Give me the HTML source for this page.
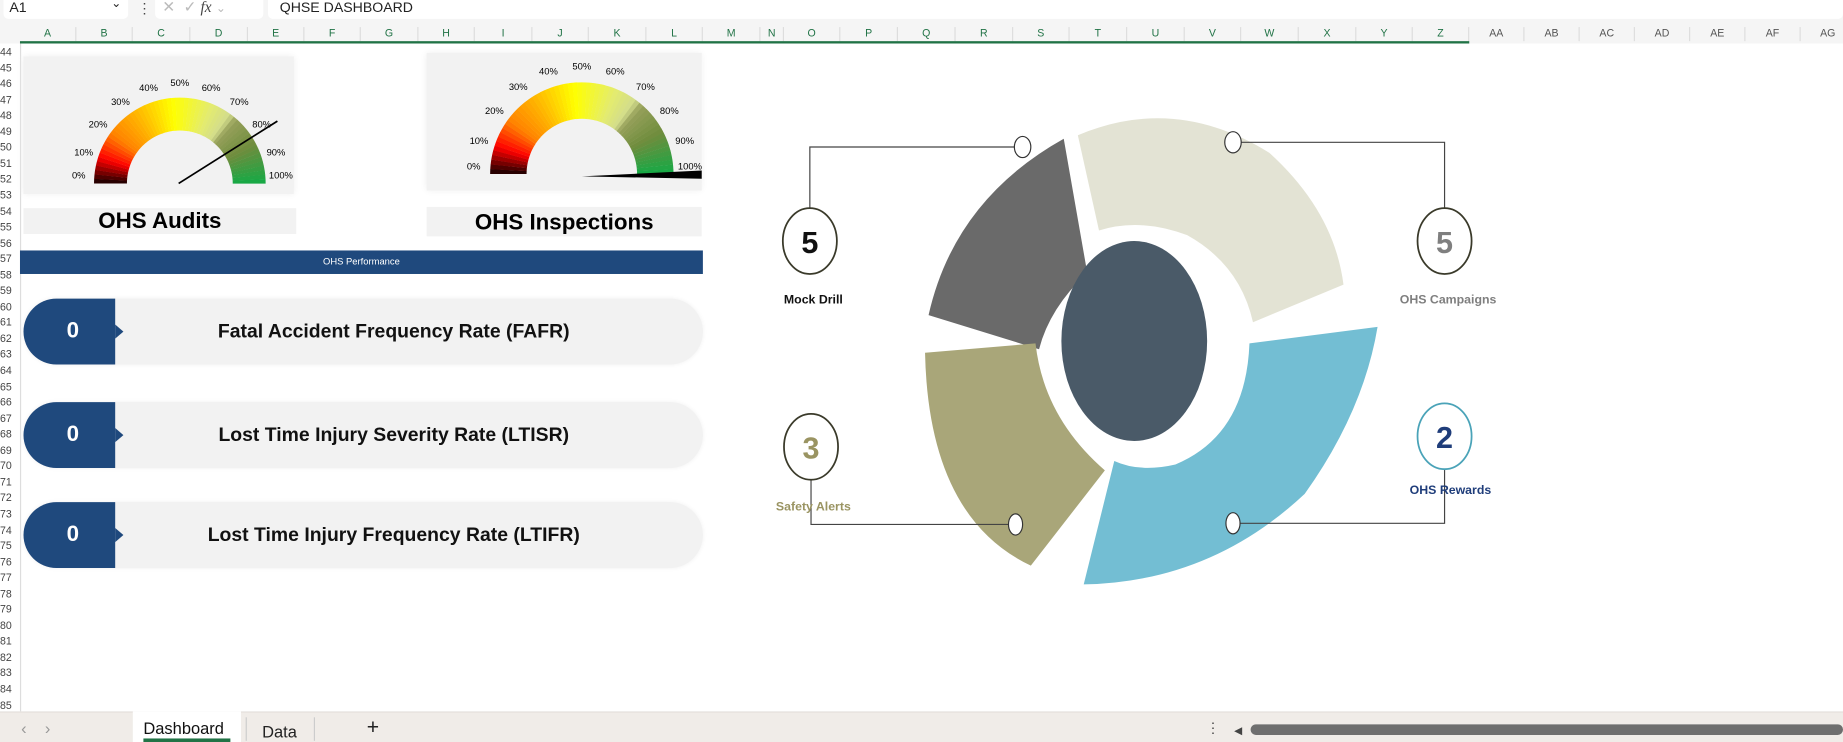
<!DOCTYPE html>
<html><head><meta charset="utf-8">
<style>
*{margin:0;padding:0;box-sizing:border-box}
html,body{width:1843px;height:742px;overflow:hidden;background:#fff}
#w{position:absolute;left:0;top:0;width:1568px;height:631px;transform:scale(1.1754,1.1759);transform-origin:0 0;font-family:"Liberation Sans",sans-serif}
.abs{position:absolute}
.nar{font-family:"Liberation Sans Narrow","Liberation Sans",sans-serif}
</style></head><body><div id="w">
<div class="abs" style="left:0;top:0;width:1568px;height:37px;background:#f5f5f5"></div>
<div class="abs" style="left:3px;top:-4px;width:106px;height:20px;background:#fff;border-radius:4px;font-size:12px;padding:3px 5px;color:#222">A1<span class="abs" style="right:6px;top:2px;font-size:10px">&#8964;</span></div>
<div class="abs" style="left:117px;top:0;font-size:12px;color:#444">&#8942;</div>
<div class="abs" style="left:132px;top:-4px;width:92px;height:20px;background:#fff;border-radius:4px;font-size:13px;color:#bbb;padding:2px 6px">✕ &nbsp;✓ <i style="color:#444;font-family:'Liberation Serif',serif">fx</i> <span style="font-size:10px">&#8964;</span></div>
<div class="abs" style="left:228px;top:-4px;width:1340px;height:20px;background:#fff;border-radius:4px;font-size:12px;padding:3px 10px;color:#222">QHSE DASHBOARD</div>
<div id="cols"></div>
<div class="abs" style="left:17px;top:35px;width:1233px;height:2px;background:#217346"></div>
<div id="rows"></div>
<div class="abs" style="left:17px;top:37px;width:1px;height:568px;background:#ddd"></div>

<div class="abs" style="left:20px;top:48px;width:230px;height:117px;background:#f2f2f2;box-shadow:0 0 6px #eee"></div>
<div class="abs" style="left:363px;top:45px;width:234px;height:117px;background:#f2f2f2;box-shadow:0 0 6px #eee"></div>
<svg id="g" class="abs" style="left:0;top:0" width="620" height="200"></svg>
<div class="abs nar" style="left:20px;top:177px;width:232px;height:22px;background:#f2f2f2;font-weight:bold;font-size:19px;text-align:center;line-height:24px">OHS Audits</div>
<div class="abs nar" style="left:363px;top:176px;width:234px;height:25px;background:#f2f2f2;font-weight:bold;font-size:19px;text-align:center;line-height:27px">OHS Inspections</div>
<div class="abs nar" style="left:17px;top:213px;width:581px;height:20px;background:#1f497d;color:#fff;font-size:8px;text-align:center;line-height:20px">OHS Performance</div>

<div id="pills"></div>

<svg class="abs" style="left:600px;top:60px" width="720" height="460" viewBox="600 60 720 460">
<path d="M905,118 L925,232 Q893,262 884,297 L790,268 Q812,170 905,118 Z" fill="#6a6a6a"/>
<path d="M917,115 Q1000,80 1080,130 Q1135,180 1143,242 L1066,274 Q1055,225 1010,200 Q970,185 935,196 Z" fill="#e3e3d4"/>
<path d="M787,300 L881,292 Q888,355 940,400 L877,481 Q790,440 787,300 Z" fill="#a9a679"/>
<path d="M1172,278 L1063,292 Q1060,370 1000,395 Q970,402 948,392 L922,497 Q1030,495 1110,420 Q1160,350 1172,278 Z" fill="#73bed3"/>
<ellipse cx="965" cy="290" rx="62" ry="85" fill="#4a5a68"/>
<g fill="none" stroke="#444" stroke-width="1">
<polyline points="689,177 689,125 864,125"/><polyline points="1055,121 1229,121 1229,177"/>
<polyline points="690,408 690,446 858,446"/><polyline points="1055,445 1229,445 1229,399"/>
</g>
<g fill="#fff" stroke="#333" stroke-width="1">
<ellipse cx="870" cy="125" rx="7" ry="9"/><ellipse cx="1049" cy="121" rx="7" ry="9"/>
<ellipse cx="864" cy="446" rx="6" ry="9"/><ellipse cx="1049" cy="445" rx="6" ry="9"/>
<ellipse cx="689" cy="205" rx="23" ry="28" stroke="#3a3a2a" stroke-width="1.5"/>
<ellipse cx="1229" cy="205" rx="23" ry="28" stroke="#3a3a2a" stroke-width="1.5"/>
<ellipse cx="690" cy="380" rx="23" ry="28" stroke="#3a3a2a" stroke-width="1.5"/>
<ellipse cx="1229" cy="371" rx="23" ry="28" stroke="#4aa3b8" stroke-width="1.5"/>
</g>
<g font-family="Liberation Sans Narrow,Liberation Sans,sans-serif" font-weight="bold" text-anchor="middle">
<text x="689" y="215" font-size="26" fill="#111">5</text>
<text x="1229" y="215" font-size="26" fill="#7f7f7f">5</text>
<text x="690" y="390" font-size="26" fill="#9a9462">3</text>
<text x="1229" y="381" font-size="26" fill="#1f3d7a">2</text>
<text x="692" y="258" font-size="10.5" fill="#111">Mock Drill</text>
<text x="1232" y="258" font-size="10.5" fill="#7f7f7f">OHS Campaigns</text>
<text x="692" y="434" font-size="10.5" fill="#9a9462">Safety Alerts</text>
<text x="1234" y="420" font-size="10.5" fill="#1f3d7a">OHS Rewards</text>
</g>
</svg>

<div class="abs" style="left:0;top:605px;width:1568px;height:26px;background:#f0ece8;border-top:1px solid #e4e0dc"></div>
<div class="abs" style="left:18px;top:611px;font-size:14px;color:#999">&#8249; &nbsp;&nbsp; &#8250;</div>
<div class="abs" style="left:113px;top:605px;width:92px;height:26px;background:#fff"></div>
<div class="abs nar" style="left:122px;top:611px;font-size:14px;color:#111">Dashboard</div>
<div class="abs" style="left:122px;top:628px;width:74px;height:3px;background:#217346"></div>
<div class="abs nar" style="left:223px;top:614px;font-size:14px;color:#222">Data</div>
<div class="abs" style="left:209px;top:610px;width:1px;height:20px;background:#ccc"></div>
<div class="abs" style="left:267px;top:610px;width:1px;height:20px;background:#ccc"></div>
<div class="abs" style="left:312px;top:608px;font-size:18px;color:#222">+</div>
<div class="abs" style="left:1026px;top:612px;font-size:12px;color:#444">&#8942;</div>
<div class="abs" style="left:1050px;top:616px;font-size:9px;color:#444">&#9664;</div>
<div class="abs" style="left:1064px;top:616px;width:504px;height:9px;background:#6e6e6e;border-radius:5px"></div>
</div>
<script>
var cols=[["A",17,65],["B",65,113],["C",113,162],["D",162,211],["E",211,259],["F",259,307],["G",307,356],["H",356,404],["I",404,453],["J",453,501],["K",501,550],["L",550,598],["M",598,647],["N",647,667],["O",667,715],["P",715,764],["Q",764,813],["R",813,862],["S",862,910],["T",910,959],["U",959,1008],["V",1008,1056],["W",1056,1105],["X",1105,1154],["Y",1154,1202],["Z",1202,1250]];
var extra=["AA","AB","AC","AD","AE","AF","AG"];var x=1250;
extra.forEach(function(n){cols.push([n,x,x+47]);x+=47;});
var h='';cols.forEach(function(c,i){var g=i<26?'#217346':'#555';
h+='<div class="abs" style="left:'+c[1]+'px;top:23px;width:'+(c[2]-c[1])+'px;height:12px;border-right:1px solid #ddd;text-align:center;font-size:9px;color:'+g+'">'+c[0]+'</div>';});
document.getElementById('cols').innerHTML=h;
h='';for(var r=44;r<=85;r++){var y=38+(r-44)*13.55;h+='<div class="abs" style="left:0;top:'+y+'px;width:17px;height:13.5px;font-size:9px;color:#444;line-height:13.5px">'+r+'</div>';}
document.getElementById('rows').innerHTML=h;
var P=[["Fatal Accident Frequency Rate (FAFR)",254],["Lost Time Injury Severity Rate (LTISR)",342],["Lost Time Injury Frequency Rate (LTIFR)",427]];
h='';P.forEach(function(p){var t=p[1];
h+='<div class="abs" style="left:20px;top:'+t+'px;width:578px;height:56px;background:#f2f2f2;border-radius:28px;box-shadow:0 0 4px #f0f0f0"></div>';
h+='<div class="abs" style="left:20px;top:'+t+'px;width:78px;height:56px;background:#1f497d;border-radius:28px 0 0 28px"></div>';
h+='<div class="abs" style="left:98px;top:'+(t+22)+'px;width:0;height:0;border-top:6px solid transparent;border-bottom:6px solid transparent;border-left:7px solid #1f497d"></div>';
h+='<div class="abs nar" style="left:20px;top:'+t+'px;width:84px;height:56px;line-height:56px;text-align:center;color:#fff;font-weight:bold;font-size:19px">0</div>';
h+='<div class="abs nar" style="left:105px;top:'+t+'px;width:460px;height:56px;line-height:56px;text-align:center;color:#111;font-weight:bold;font-size:16.5px">'+p[0]+'</div>';});
document.getElementById('pills').innerHTML=h;
var st=[[0,[20,0,0]],[.1,[255,0,0]],[.2,[255,130,0]],[.32,[255,180,0]],[.47,[255,255,0]],[.62,[228,236,110]],[.7,[210,220,140]],[.73,[150,160,90]],[.85,[110,140,60]],[1,[20,170,70]]];
function col(t){for(var i=1;i<st.length;i++){if(t<=st[i][0]){var a=st[i-1],b=st[i],f=(t-a[0])/(b[0]-a[0]);return 'rgb('+a[1].map(function(v,k){return Math.round(v+(b[1][k]-v)*f)}).join(',')+')';}}return 'rgb(20,170,70)';}
function gauge(cx,cy,ro,ri,rl){var s='',N=60;for(var i=0;i<N;i++){var a1=Math.PI*(1-i/N),a2=Math.PI*(1-(i+1.05)/N);
function p(r,a){return (cx+r*Math.cos(a)).toFixed(2)+','+(cy-r*Math.sin(a)).toFixed(2)}
s+='<path d="M'+p(ri,a1)+' L'+p(ro,a1)+' A'+ro+','+ro+' 0 0 1 '+p(ro,a2)+' L'+p(ri,a2)+' A'+ri+','+ri+' 0 0 0 '+p(ri,a1)+'Z" fill="'+col((i+.5)/N)+'"/>';}
for(var k=0;k<=10;k++){var a=Math.PI*(1-k/10);var X=cx+rl*Math.cos(a),Y=cy-rl*Math.sin(a)+3-(k==0||k==10?7:0);
s+='<text x="'+X.toFixed(1)+'" y="'+Y.toFixed(1)+'" font-size="8" text-anchor="middle" font-family="Liberation Sans Narrow,Liberation Sans,sans-serif">'+(k*10)+'%</text>';}
return s;}
var s=gauge(153,156,73,45,86)+gauge(495,148,78,47,92);
s+='<line x1="152" y1="156" x2="236" y2="103" stroke="#000" stroke-width="1.5"/>';
s+='<polygon points="495,150 597,145 597,152" fill="#000"/>';
document.getElementById('g').innerHTML=s;
</script>
</body></html>
